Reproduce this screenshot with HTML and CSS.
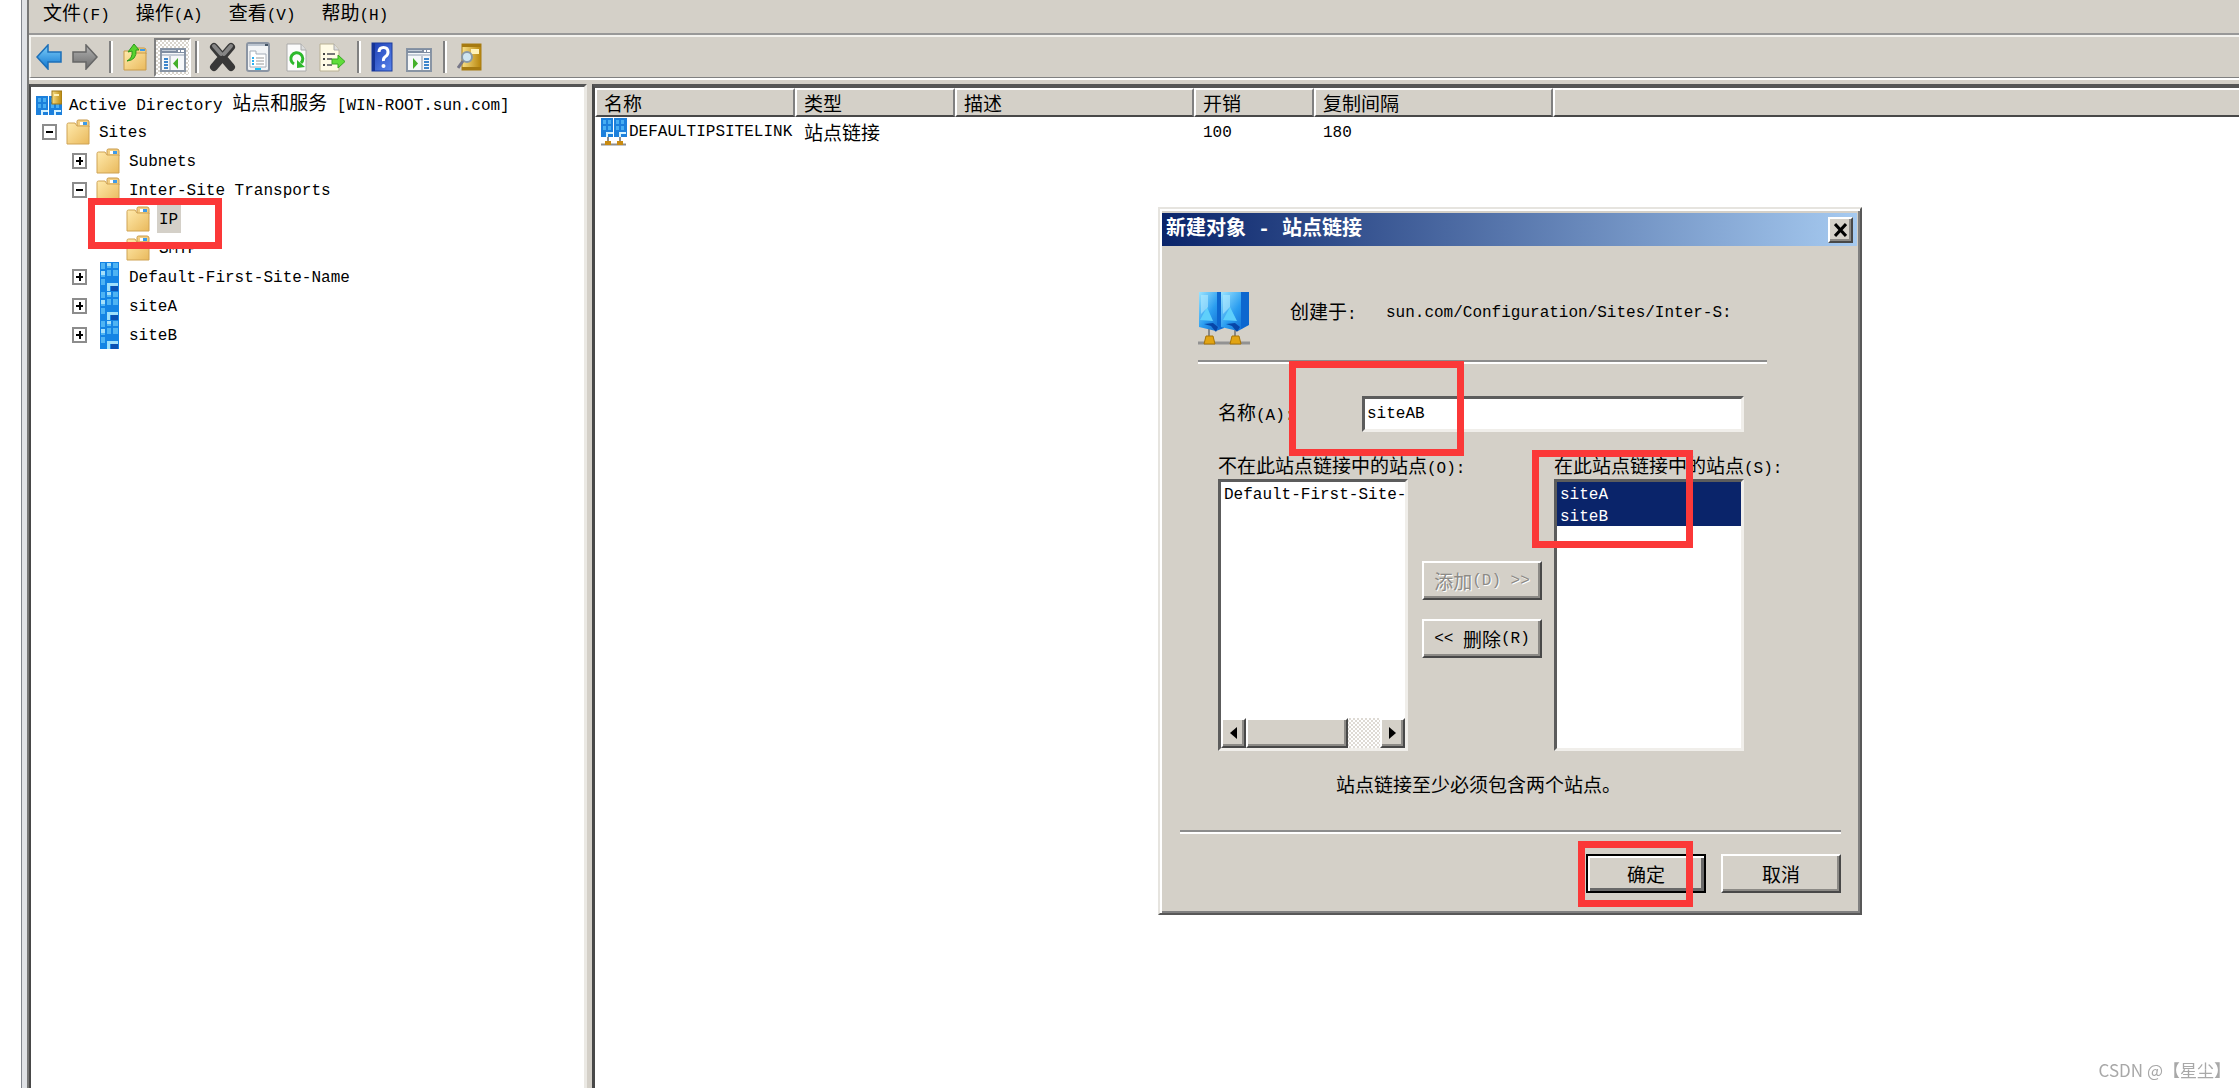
FILE: index.html
```html
<!DOCTYPE html>
<html lang="zh-CN">
<head>
<meta charset="utf-8">
<title>Active Directory 站点和服务</title>
<link rel="stylesheet" href="styles.css">
</head>
<body>
<svg class="defs" aria-hidden="true">
  <defs>
    <linearGradient id="gFold" x1="0" y1="0" x2="1" y2="1"><stop offset="0" stop-color="#ffeaac"/><stop offset="1" stop-color="#e9b95c"/></linearGradient>
    <linearGradient id="gBlue" x1="0" y1="0" x2="0" y2="1"><stop offset="0" stop-color="#7fd0fa"/><stop offset="1" stop-color="#0e74cf"/></linearGradient>
    <linearGradient id="gGrey" x1="0" y1="0" x2="0" y2="1"><stop offset="0" stop-color="#b4b4b4"/><stop offset="1" stop-color="#6a6a6a"/></linearGradient>
    <linearGradient id="gGold" x1="0" y1="0" x2="1" y2="0"><stop offset="0" stop-color="#f8df86"/><stop offset="1" stop-color="#b8860b"/></linearGradient>
    <linearGradient id="gHelp" x1="0" y1="0" x2="1" y2="1"><stop offset="0" stop-color="#1b3db4"/><stop offset="1" stop-color="#5a85ec"/></linearGradient>
    <linearGradient id="gBld" x1="0" y1="0" x2="1" y2="1"><stop offset="0" stop-color="#9be4ff"/><stop offset=".5" stop-color="#2a9df0"/><stop offset="1" stop-color="#0b5fc8"/></linearGradient>
    <symbol id="folder" viewBox="0 0 24 26">
      <path d="M11 5V2.500Q11 1 12.500 1H21Q23 1 23 3V8H11Z" fill="#f2cf83" stroke="#c99b4a"/>
      <rect x="14" y="3" width="7" height="3" fill="#fff"/><rect x="17" y="3" width="4" height="3" fill="#3e9be8"/>
      <path d="M1 5.500Q1 4 2.500 4H9L11 7H23V25H1Z" fill="url(#gFold)" stroke="#cfa354"/>
    </symbol>
    <symbol id="site" viewBox="0 0 24 29">
      <rect x="4" y="0" width="19" height="29" fill="#1484e4"/>
      <path d="M5 1h4v6H5zM11 1h4v5h-4zM17 1h5v5h-5zM5 9h4v6H5zM11 8h4v6h-4zM17 8h5v6h-5zM5 17h4v6H5z" fill="#4fb4f3"/>
      <path d="M5 9h4v4H5zM11 1h4v3h-4z" fill="#a5e0fa"/>
      <path d="M11 21h11v3h-8v5h-3z" fill="#9fe0fb"/><rect x="15" y="24" width="7" height="5" fill="#0a52b4"/>
    </symbol>
    <symbol id="sites" viewBox="0 0 26 20">
      <path d="M0 0H12V19H0ZM13 0H26V19H13Z" fill="#1c80dc"/>
      <path d="M2 2h3v4H2zM7 2h3v4H7zM2 8h3v4H2zM7 8h3v4H7zM15 2h3v4h-3zM20 2h3v4h-3zM15 8h3v4h-3zM20 8h3v4h-3z" fill="#48aef2"/>
      <path d="M5 19v-5h7v2H7v3zM18 19v-5h7v2h-5v3z" fill="#d3f2ff"/>
    </symbol>
    <symbol id="panelwin" viewBox="0 0 26 24">
      <rect x="1" y="1" width="24" height="22" fill="#f6f8fa" stroke="#8894a4" stroke-width="2"/>
      <rect x="1" y="1" width="24" height="4" fill="#7f8da1"/><rect x="2" y="2" width="14" height="1" fill="#c2cbd6"/>
      <path d="M18 2h2v2h-2zM21 2h3v2h-3z" fill="#fff"/><rect x="2" y="6" width="22" height="2" fill="#c3cbd6"/>
    </symbol>
  </defs>
</svg>

<div class="frame">
  <div class="app">
    <nav class="menubar">
      <button type="button"><span class="zh">文件</span>(F)</button>
      <button type="button"><span class="zh">操作</span>(A)</button>
      <button type="button"><span class="zh">查看</span>(V)</button>
      <button type="button"><span class="zh">帮助</span>(H)</button>
    </nav>
    <div class="toolbar" role="toolbar">
      <button type="button" aria-label="后退"><svg width="26" height="26" viewBox="0 0 26 26"><path d="M1 13 12 1V8H25V18H12V25Z" fill="url(#gBlue)" stroke="#1c6fb8" stroke-width="1.500"/></svg></button>
      <button type="button" aria-label="前进" class="fwd"><svg width="26" height="26" viewBox="0 0 26 26"><path d="M25 13 14 1V8H1V18H14V25Z" fill="url(#gGrey)" stroke="#666" stroke-width="1.500"/></svg></button>
      <span class="sep"></span>
      <button type="button" aria-label="上一级"><svg width="24" height="28" viewBox="0 0 24 28"><path d="M12 7V5h9q2 0 2 2v4H12z" fill="#f2cf83" stroke="#c99b4a"/><rect x="17" y="6" width="5" height="2" fill="#3e9be8"/><path d="M1 8H10L12 10H23V27H1Z" fill="url(#gFold)" stroke="#c99b4a"/><path d="M4 18Q10 15 9 8L5 9 11 1 16 7 13 7Q14 17 4 18Z" fill="#58d32e" stroke="#2a981c"/></svg></button>
      <button type="button" aria-label="显示控制台树" class="pressed"><svg width="26" height="24"><use href="#panelwin"/><path d="M10 8V22" stroke="#8894a4"/><path d="M4 11h4M4 14h4M4 17h4M4 20h4" stroke="#3d86cc" stroke-width="2"/><path d="M13 15.500 18 10V21Z" fill="#43b02a"/></svg></button>
      <span class="sep"></span>
      <button type="button" aria-label="删除"><svg width="27" height="30" viewBox="0 0 27 30"><path d="M5 5 22 25M22 5 5 25" stroke="#383838" stroke-width="8" stroke-linecap="round"/><path d="M5 4 12 12M22 4 15 12" stroke="#858585" stroke-width="4" stroke-linecap="round"/></svg></button>
      <button type="button" aria-label="属性" class="props"><svg width="24" height="30" viewBox="0 0 24 30"><rect x="1" y="1" width="22" height="28" rx="2" fill="#f2f4f6" stroke="#8b95a3" stroke-width="2"/><path d="M2 3H22" stroke="#bcc5d0" stroke-width="2"/><rect x="19" y="2" width="3" height="2" fill="#456"/><path d="M4 9h6v3h10v13H4z" fill="#fff" stroke="#a5adb8"/><path d="M6 16h2M6 19h2M6 22h2" stroke="#2cb0f0" stroke-width="2"/><path d="M10 16h8M10 19h8M10 22h8" stroke="#999"/><rect x="9" y="26" width="6" height="2" fill="#18c0f4"/></svg></button>
      <button type="button" aria-label="刷新" class="refresh"><svg width="21" height="29" viewBox="0 0 21 29"><path d="M1 1H15L20 7V28H1Z" fill="#fbfbfb" stroke="#aaa"/><path d="M15 1V7H20" fill="#ddd" stroke="#aaa"/><path d="M8 21A6 6 0 1 1 15 20" fill="none" stroke="#2db82c" stroke-width="3"/><path d="M11 17V25L19 24Z" fill="#2db82c"/></svg></button>
      <button type="button" aria-label="导出列表" class="export"><svg width="27" height="29" viewBox="0 0 27 29"><path d="M1 1H15L20 7V28H1Z" fill="#fffbe6" stroke="#b9b194"/><path d="M15 1V7H20" fill="#ddd" stroke="#aaa"/><path d="M4 11h2M4 16h2M4 22h2" stroke="#444" stroke-width="2"/><path d="M8 11h8M8 16h5M8 22h5" stroke="#777" stroke-width="2"/><path d="M13 16H19V12L26 18.500 19 25V21H13Z" fill="#5fdd3a" stroke="#36a722"/></svg></button>
      <span class="sep"></span>
      <button type="button" aria-label="帮助"><svg width="22" height="30" viewBox="0 0 22 30"><rect x="1" y="1" width="20" height="28" fill="url(#gHelp)" stroke="#1c3c9c"/><path d="M1 1H4V29H1Z" fill="#163496"/><path d="M8 10Q8 5.500 12.500 5.500T17 10Q17 13 14.500 14.500T12.500 19" fill="none" stroke="#fff" stroke-width="3"/><circle cx="12.500" cy="24" r="2" fill="#fff"/></svg></button>
      <button type="button" aria-label="显示操作窗格" class="act"><svg width="26" height="24"><use href="#panelwin"/><path d="M16 8V22" stroke="#8894a4"/><path d="M18 11h5M18 14h5M18 17h5M18 20h5" stroke="#3d86cc" stroke-width="2"/><path d="M12 15.500 7 10V21Z" fill="#43b02a"/></svg></button>
      <span class="sep"></span>
      <button type="button" aria-label="查找"><svg width="25" height="28" viewBox="0 0 25 28"><rect x="5" y="1" width="19" height="26" fill="url(#gGold)" stroke="#a87d14"/><path d="M5 1H24V4H5ZM5 24H24V27H5Z" fill="#a67a10"/><rect x="14" y="6" width="8" height="5" fill="#fff2b8"/><circle cx="10" cy="14" r="5" fill="#cfe6f2" stroke="#8a99a5" stroke-width="2"/><path d="M6 18 1 25" stroke="#778" stroke-width="3"/></svg></button>
    </div>

    <main class="panes">
      <section class="tree">
        <div class="row root"><svg width="26" height="26" viewBox="0 0 26 26"><use href="#sites" y="6" width="26" height="20"/><rect x="16" y="1" width="10" height="13" fill="url(#gGold)" stroke="#9c7718"/><path d="M18 4h5v2h-5z" fill="#fff2b8"/></svg><span>Active Directory <span class="zh">站点和服务</span> [WIN-ROOT.sun.com]</span></div>
        <ul>
          <li><div class="row"><button type="button" class="exp open" aria-label="折叠"></button><svg width="24" height="26"><use href="#folder"/></svg><span>Sites</span></div>
            <ul>
              <li><div class="row"><button type="button" class="exp" aria-label="展开"></button><svg width="24" height="26"><use href="#folder"/></svg><span>Subnets</span></div></li>
              <li><div class="row"><button type="button" class="exp open" aria-label="折叠"></button><svg width="24" height="26"><use href="#folder"/></svg><span>Inter-Site Transports</span></div>
                <ul>
                  <li><div class="row leaf"><svg width="24" height="26"><use href="#folder"/></svg><span class="current">IP</span></div></li>
                  <li><div class="row leaf"><svg width="24" height="26"><use href="#folder"/></svg><span>SMTP</span></div></li>
                </ul>
              </li>
              <li><div class="row"><button type="button" class="exp" aria-label="展开"></button><svg width="24" height="29"><use href="#site"/></svg><span>Default-First-Site-Name</span></div></li>
              <li><div class="row"><button type="button" class="exp" aria-label="展开"></button><svg width="24" height="29"><use href="#site"/></svg><span>siteA</span></div></li>
              <li><div class="row"><button type="button" class="exp" aria-label="展开"></button><svg width="24" height="29"><use href="#site"/></svg><span>siteB</span></div></li>
            </ul>
          </li>
        </ul>
        <div class="mark mark-ip"></div>
      </section>

      <section class="list">
        <table>
          <colgroup><col class="c-name"><col class="c-type"><col class="c-desc"><col class="c-cost"><col class="c-desc"><col></colgroup>
          <thead><tr><th>名称</th><th>类型</th><th>描述</th><th>开销</th><th>复制间隔</th><th></th></tr></thead>
          <tbody><tr><td class="name"><svg width="26" height="28" viewBox="0 0 26 28"><use href="#sites" width="26" height="20"/><path d="M7 19V24M19 19V24M0 26.500H25" stroke="#8d8d8d" stroke-width="2"/><path d="M4 23h6v4H4zM16 23h6v4h-6z" fill="#c98a10"/></svg>DEFAULTIPSITELINK</td><td class="zh">站点链接</td><td></td><td>100</td><td>180</td><td></td></tr></tbody>
        </table>
      </section>
    </main>
  </div>
</div>

<form class="dialog" role="dialog" aria-labelledby="dlg-title" onsubmit="return false">
  <header>
    <h1 id="dlg-title">新建对象 - 站点链接</h1>
    <button type="button" class="btn close" aria-label="关闭"><svg width="13" height="14" viewBox="0 0 13 14"><path d="M1 1 12 13M12 1 1 13" stroke="#000" stroke-width="3"/></svg></button>
  </header>
  <div class="content">
    <div class="where">
      <svg width="52" height="56" viewBox="0 0 52 56">
        <path d="M11 36V48M37 36V48" stroke="#888" stroke-width="2"/>
        <path d="M1 2H26V38L18 41 1 37Z" fill="url(#gBld)"/><path d="M23 2H51V35L40 41 23 37Z" fill="url(#gBld)"/>
        <path d="M19 2H23V38L19 35ZM43 2H51V34L43 39Z" fill="#0d67cf"/>
        <path d="M2 30 9 17 15 31ZM25 30 32 17 39 31Z" fill="#5fd0fb"/>
        <path d="M3 5H10V17L3 24ZM25 5H32V17L25 24Z" fill="#b3ebff" opacity=".6"/>
        <path d="M6 34 15 33 20 37 18 42 13 36ZM28 34 37 33 42 37 39 42 34 36Z" fill="#0746a8"/>
        <path d="M0 53H52" stroke="#929292" stroke-width="3"/>
        <path d="M8 46H15L17 54H6ZM34 46H41L43 54H32Z" fill="#e2a413" stroke="#a87408"/>
      </svg>
      <span class="lbl"><span class="zh">创建于</span>:</span>
      <span>sun.com/Configuration/Sites/Inter-S:</span>
    </div>
    <hr>
    <div class="fields">
      <div class="namerow"><label for="nm"><span class="zh">名称</span>(A):</label><input id="nm" type="text" value="siteAB"></div>
      <div class="lists">
        <div class="side">
          <label for="out"><span class="zh">不在此站点链接中的站点</span>(O):</label>
          <div class="box">
            <select id="out" multiple><option>Default-First-Site-Name</option></select>
            <div class="hscroll"><button type="button" class="btn" aria-label="向左"><svg width="7" height="12"><path d="M7 0V12L0 6Z"/></svg></button><span class="btn thumb"></span><span class="track"></span><button type="button" class="btn" aria-label="向右"><svg width="7" height="12"><path d="M0 0V12L7 6Z"/></svg></button></div>
          </div>
        </div>
        <div class="mid">
          <button type="button" class="btn" disabled><span class="zh">添加</span>(D) &gt;&gt;</button>
          <button type="button" class="btn">&lt;&lt; <span class="zh">删除</span>(R)</button>
        </div>
        <div class="side">
          <label for="in"><span class="zh">在此站点链接中的站点</span>(S):</label>
          <div class="box"><select id="in" multiple><option selected>siteA</option><option selected>siteB</option></select></div>
        </div>
      </div>
    </div>
    <p class="hint">站点链接至少必须包含两个站点。</p>
  </div>
  <footer>
    <button type="submit" class="btn ok">确定</button>
    <button type="button" class="btn">取消</button>
  </footer>
  <div class="mark mark-name"></div>
  <div class="mark mark-sites"></div>
  <div class="mark mark-ok"></div>
</form>
<div class="watermark">CSDN @【星尘】</div>
</body>
</html>
```

FILE: styles.css
```css
:root {
  --face: #d4d0c8;
  --shade: #808080;
  --dark: #484848;
  --zh: "Noto Sans CJK SC", sans-serif;
  --mono: "Liberation Mono", "Noto Sans CJK SC", monospace;
}
* { box-sizing: border-box; }
body { margin: 0; background: #fff; color: #000; font: 16px/24px var(--mono); overflow: hidden; }
button, input, select { font: inherit; color: inherit; margin: 0; padding: 0; border: 0; border-radius: 0; background: none; }
svg { display: block; flex: none; }
.defs { position: absolute; width: 0; height: 0; }
.zh { font-family: var(--zh); font-size: 19px; }
.frame { margin-left: 21px; padding-left: 5px; border-left: 1px solid #83878f; background: #e0e2e6; }
.app { min-height: 100vh; display: flex; flex-direction: column; background: var(--face); border-left: 2px solid #777; }

/* menu and tool bars */
.menubar { display: flex; gap: 26px; height: 35px; padding: 0 14px 8px; border-bottom: 2px solid #989898; }
.menubar button { height: 26px; white-space: nowrap; }
.toolbar { display: flex; align-items: center; height: 43px; padding-left: 5px; border: 2px solid #f4f3ef; border-width: 2px 0 0 2px; border-bottom: 1px solid var(--shade); }
.toolbar .fwd { margin-left: 10px; }
.sep { width: 4px; height: 32px; margin: 0 10px 0 11px; border-left: 2px solid var(--shade); border-right: 2px solid #fff; }
.pressed { margin-left: 7px; width: 37px; height: 39px; padding: 6px 0 0 4px; border: 2px solid; border-color: var(--shade) #fff #fff var(--shade); background: repeating-conic-gradient(#fff 0 25%, #d8d4cc 0 50%) 0 0 / 4px 4px; }
.pressed + .sep { margin-left: 4px; }
.props { margin-left: 10px; }
.refresh { margin-left: 16px; }
.export { margin-left: 12px; }
.act { margin: 5px 0 0 13px; }

/* panes */
.panes { flex: 1; display: grid; grid-template-columns: 558px minmax(0, 1fr); gap: 5px; border-top: 2px solid #fff; padding-top: 4px; }
.tree { position: relative; background: #fff; border: 2px solid var(--dark); border-top: 3px solid #555; border-right: 3px solid #ebe9e4; border-bottom: 0; padding-top: 1px; }
.tree ul { list-style: none; margin: 0; padding: 0 0 0 11px; }
.tree ul ul { padding-left: 30px; }
.row { display: flex; align-items: center; gap: 9px; height: 29px; white-space: nowrap; }
.row.root { padding-left: 5px; gap: 7px; }
.row > span { height: 28px; line-height: 30px; }
.row.root > span { line-height: 26px; }
.exp { position: relative; width: 15px; height: 16px; border: 2px solid #8c8c8c; }
.exp::before, .exp::after { content: ""; position: absolute; left: 2px; top: 5px; width: 7px; height: 2px; background: #000; }
.exp::after { left: 5px; top: 2px; width: 2px; height: 8px; }
.exp.open::after { display: none; }
.leaf { padding-left: 24px; }
.leaf .current { background: var(--face); margin: 0 0 0 -2px; padding: 0 3px 0 2px; }
.list { background: #fff; border-left: 3px solid var(--dark); border-top: 4px solid #555; }
table { width: 100%; table-layout: fixed; border-collapse: separate; border-spacing: 0; }
.c-name { width: 200px; }
.c-type { width: 160px; }
.c-desc { width: 239px; }
.c-cost { width: 120px; }
th { height: 29px; padding: 0 7px; text-align: left; font: 19px/24px var(--zh); background: var(--face); border: 2px solid; border-color: #fff var(--shade) var(--dark) #fff; }
th:last-child { border-right: 0; }
td { height: 29px; padding: 2px 9px 0; white-space: nowrap; line-height: 24px; }
td.zh { padding-top: 0; }
td.name { padding: 0 0 0 6px; display: flex; align-items: center; gap: 2px; line-height: 28px; }

/* dialog */
.dialog { position: absolute; left: 1158px; top: 207px; width: 704px; display: flex; flex-direction: column; background: var(--face); border: 2px solid; border-color: #e6e4df #585858 #585858 #e6e4df; box-shadow: inset 2px 2px #fff, inset -2px -2px var(--shade); padding: 4px 3px 20px 2px; }
.dialog header { display: flex; align-items: center; justify-content: space-between; height: 33px; padding: 0 4px; background: linear-gradient(90deg, #0a246a, #a6caf0); }
h1 { margin: 0; font: bold 20px/28px var(--mono); color: #fff; }
.btn { display: flex; align-items: center; justify-content: center; background: var(--face); border: 2px solid; border-color: #fff #484848 #484848 #fff; box-shadow: inset -2px -2px #8c8a86; white-space: pre; }
.close { width: 25px; height: 26px; }
.content { padding: 44px 90px 0 36px; }
.where { display: flex; align-items: center; height: 56px; white-space: nowrap; }
.where .lbl { margin-left: 40px; width: 96px; }
.where > span { margin-top: -10px; }
hr { width: 100%; height: 4px; margin: 14px 0 0; border: 0; border-top: 2px solid #8c8c8c; border-bottom: 2px solid #fff; }
.fields { padding: 32px 0 0 20px; }
.namerow, .lists { width: 526px; }
.namerow { display: flex; align-items: center; }
.namerow label { width: 144px; }
input { width: 382px; height: 36px; padding: 0 2px; background: #fff; }
input, .box { border: 3px solid; border-color: #5c5c5c #f0eeea #f0eeea #5c5c5c; background: #fff; }
.lists { display: flex; padding-top: 14px; }
.side { width: 190px; }
.side label { display: block; height: 33px; line-height: 38px; white-space: nowrap; }
.box { height: 272px; display: flex; flex-direction: column; }
select { flex: 1; width: 100%; overflow: hidden; outline: 0; scrollbar-width: none; }
option { height: 22px; min-height: 22px; padding: 4px 3px 0; line-height: 18px; overflow: hidden; }
option:checked { background: linear-gradient(#0a246a, #0a246a); -webkit-text-fill-color: #fff; }
.mid { display: flex; flex-direction: column; gap: 19px; padding: 115px 12px 0 14px; width: 146px; }
.mid .btn, footer .btn { width: 120px; height: 39px; }
.btn:disabled { color: #8c8a86; text-shadow: 1px 1px #fff; }
.hscroll { display: flex; height: 30px; background: repeating-conic-gradient(#fff 0 25%, #dedad4 0 50%) 0 0 / 4px 4px; }
.hscroll button { width: 25px; }
.thumb { width: 102px; }
.track { flex: 1; }
.hint { margin: 21px 0 0; padding-left: 138px; font: 19px/24px var(--zh); white-space: nowrap; }
footer { display: flex; justify-content: flex-end; gap: 15px; margin: 34px 16px 0 18px; padding-top: 22px; border-top: 2px solid #8c8c8c; box-shadow: inset 0 2px #fff; font: 19px/24px var(--zh); }
.ok { outline: 2px solid #000; outline-offset: -2px; border-color: #000; box-shadow: inset 2px 2px #fff, inset -3px -3px #696969; }

/* highlight rectangles over the windows */
.mark { position: absolute; border: 7px solid #fb3838; pointer-events: none; }
.mark-ip { left: 57px; top: 111px; width: 134px; height: 51px; }
.mark-name { left: 129px; top: 152px; width: 175px; height: 95px; }
.mark-sites { left: 372px; top: 241px; width: 161px; height: 98px; }
.mark-ok { left: 418px; top: 632px; width: 115px; height: 66px; }
.watermark { position: fixed; right: 8px; bottom: 6px; font: 17px/24px var(--zh); color: #a8a8a8; }
```
